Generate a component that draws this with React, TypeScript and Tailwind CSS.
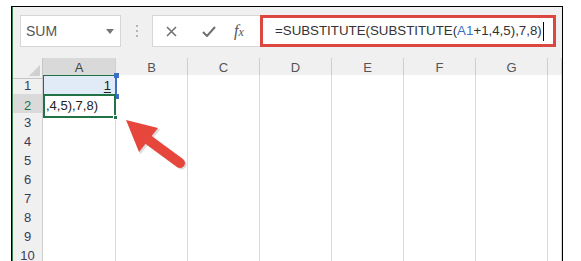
import React from "react";

const COLS = ["A", "B", "C", "D", "E", "F", "G", ""];
const ROWS = [1, 2, 3, 4, 5, 6, 7, 8, 9, 10];
const gridCols = "grid grid-cols-[30px_73px_72px_72px_72px_72px_72px_72px_14px]";

const Toolbar = () => {
  return (
    <div className="h-[51px] bg-[#f0f0f0] flex items-start pt-[8px]">
      {/* name box */}
      <div className="ml-[7px] w-[101px] h-[32px] bg-white border border-[#d6d6d6] flex items-center justify-between pl-[5px] pr-[6px]">
        <span className="text-[14px] text-[#555]">SUM</span>
        <svg width="8" height="5" viewBox="0 0 8 5">
          <path d="M0 0 L8 0 L4 5 Z" fill="#777" />
        </svg>
      </div>
      {/* separator dots */}
      <div className="ml-[15px] h-[32px] flex flex-col justify-center gap-[3px]">
        <span className="block w-[2px] h-[2px] bg-[#b5b5b5]" />
        <span className="block w-[2px] h-[2px] bg-[#b5b5b5]" />
        <span className="block w-[2px] h-[2px] bg-[#b5b5b5]" />
      </div>
      {/* cancel / enter / fx */}
      <div className="ml-[14px] w-[108px] h-[32px] bg-white border border-[#d6d6d6] border-r-0 flex items-center">
        <svg className="ml-[13px]" width="11" height="11" viewBox="0 0 11 11">
          <path d="M1 1 L10 10 M10 1 L1 10" stroke="#6f6f6f" strokeWidth="1.5" />
        </svg>
        <svg className="ml-[25px]" width="14" height="11" viewBox="0 0 14 11">
          <path d="M1 6 L5 10 L13 1" stroke="#6f6f6f" strokeWidth="2" fill="none" />
        </svg>
        <span className="ml-[18px] text-[16px] italic text-[#555] font-['Liberation_Serif',serif] leading-none">
          f<span className="text-[12px]">x</span>
        </span>
      </div>
      {/* formula bar */}
      <div className="w-[296px] h-[32px] bg-white border-[3px] border-[#dc4840] flex items-center pl-[12px]">
        <span className="text-[13.3px] text-[#333] whitespace-nowrap">
          =SUBSTITUTE(SUBSTITUTE(<span className="text-[#3f6fc2]">A1</span>+1,4,5),7,8)
        </span>
        <span className="ml-[1px] w-[1px] h-[19px] bg-black" />
      </div>
    </div>
  );
};

const HeaderRow = () => {
  return (
    <div className={`${gridCols} h-[17px]`}>
      <div className="bg-[#f0f0f0] border-r border-b border-[#c6c6c6] relative overflow-hidden">
        <svg className="absolute right-[2px] bottom-[2px]" width="11" height="11" viewBox="0 0 11 11">
          <path d="M11 0 L11 11 L0 11 Z" fill="#d0d0d0" />
        </svg>
      </div>
      {COLS.map((c, i) => (
        <div
          key={i}
          className={`flex items-center justify-center text-[13px] border-r border-b border-[#cfcfcf] ${
            c === "A" ? "bg-[#d9d9d9] text-[#444]" : "bg-[#f0f0f0] text-[#555]"
          }`}
        >
          {c}
        </div>
      ))}
    </div>
  );
};

const Row = ({ n }: { n: number }) => {
  return (
    <div className={`${gridCols} h-[19px]`}>
      <div
        className={`flex items-center justify-center text-[13px] border-r border-b border-[#cfcfcf] ${
          n === 2 ? "bg-[#dadada] text-[#217346]" : "bg-[#f0f0f0] text-[#3b3b5a]"
        }`}
      >
        {n}
      </div>
      {COLS.map((c, i) => {
        if (c === "A" && n === 1) {
          return (
            <div
              key={i}
              className="relative bg-[#e1eaf7] border-t border-l border-b border-[#217346] flex items-center justify-end pr-[5px] text-[13px] text-[#222]"
            >
              <span className="underline underline-offset-2">1</span>
              <span className="absolute right-[-1px] top-0 bottom-0 w-[2px] bg-[#3b6fc4]" />
              <span className="absolute right-[-3px] top-[-3px] w-[5px] h-[5px] bg-[#3b6fc4]" />
              <span className="absolute right-[-3px] bottom-[-3px] w-[5px] h-[5px] bg-[#3b6fc4]" />
            </div>
          );
        }
        if (c === "A" && n === 2) {
          return (
            <div
              key={i}
              className="relative bg-white border-2 border-[#217346] flex items-center pl-[1px] text-[13px] text-[#222] whitespace-nowrap"
            >
              ,4,5),7,8)
              <span className="absolute right-[-4px] bottom-[-4px] w-[5px] h-[5px] bg-[#217346] border border-white" />
            </div>
          );
        }
        return <div key={i} className="bg-white border-r border-b border-[#d9d9d9]" />;
      })}
    </div>
  );
};

const Arrow = () => {
  return (
    <svg className="absolute left-[118px] top-[112px] pointer-events-none" width="72" height="64" viewBox="0 0 72 64">
      <g transform="translate(1.5,1.5)" fill="#9a9a9a" opacity="0.35" stroke="#9a9a9a">
        <path d="M8 8 L40 16 L21 40 Z" />
        <path d="M28 26 L62 51" strokeWidth="10" strokeLinecap="round" />
      </g>
      <path d="M8 8 L40 16 L21 40 Z" fill="#e6463c" />
      <path d="M28 26 L62 51" stroke="#e6463c" strokeWidth="10" strokeLinecap="round" />
    </svg>
  );
};

const App = () => {
  return (
    <div className="w-[581px] h-[261px] overflow-hidden bg-white pt-[6px] pl-[11px] font-['Liberation_Sans',Arial,sans-serif]">
      <div className="relative w-[552px] h-[300px] border border-b-0 border-black">
        <div className="h-full border-l border-[#3f7d52] overflow-hidden">
          <Toolbar />
          <HeaderRow />
          {ROWS.map((n) => (
            <Row key={n} n={n} />
          ))}
        </div>
      </div>
      <Arrow />
    </div>
  );
};

export default App;
